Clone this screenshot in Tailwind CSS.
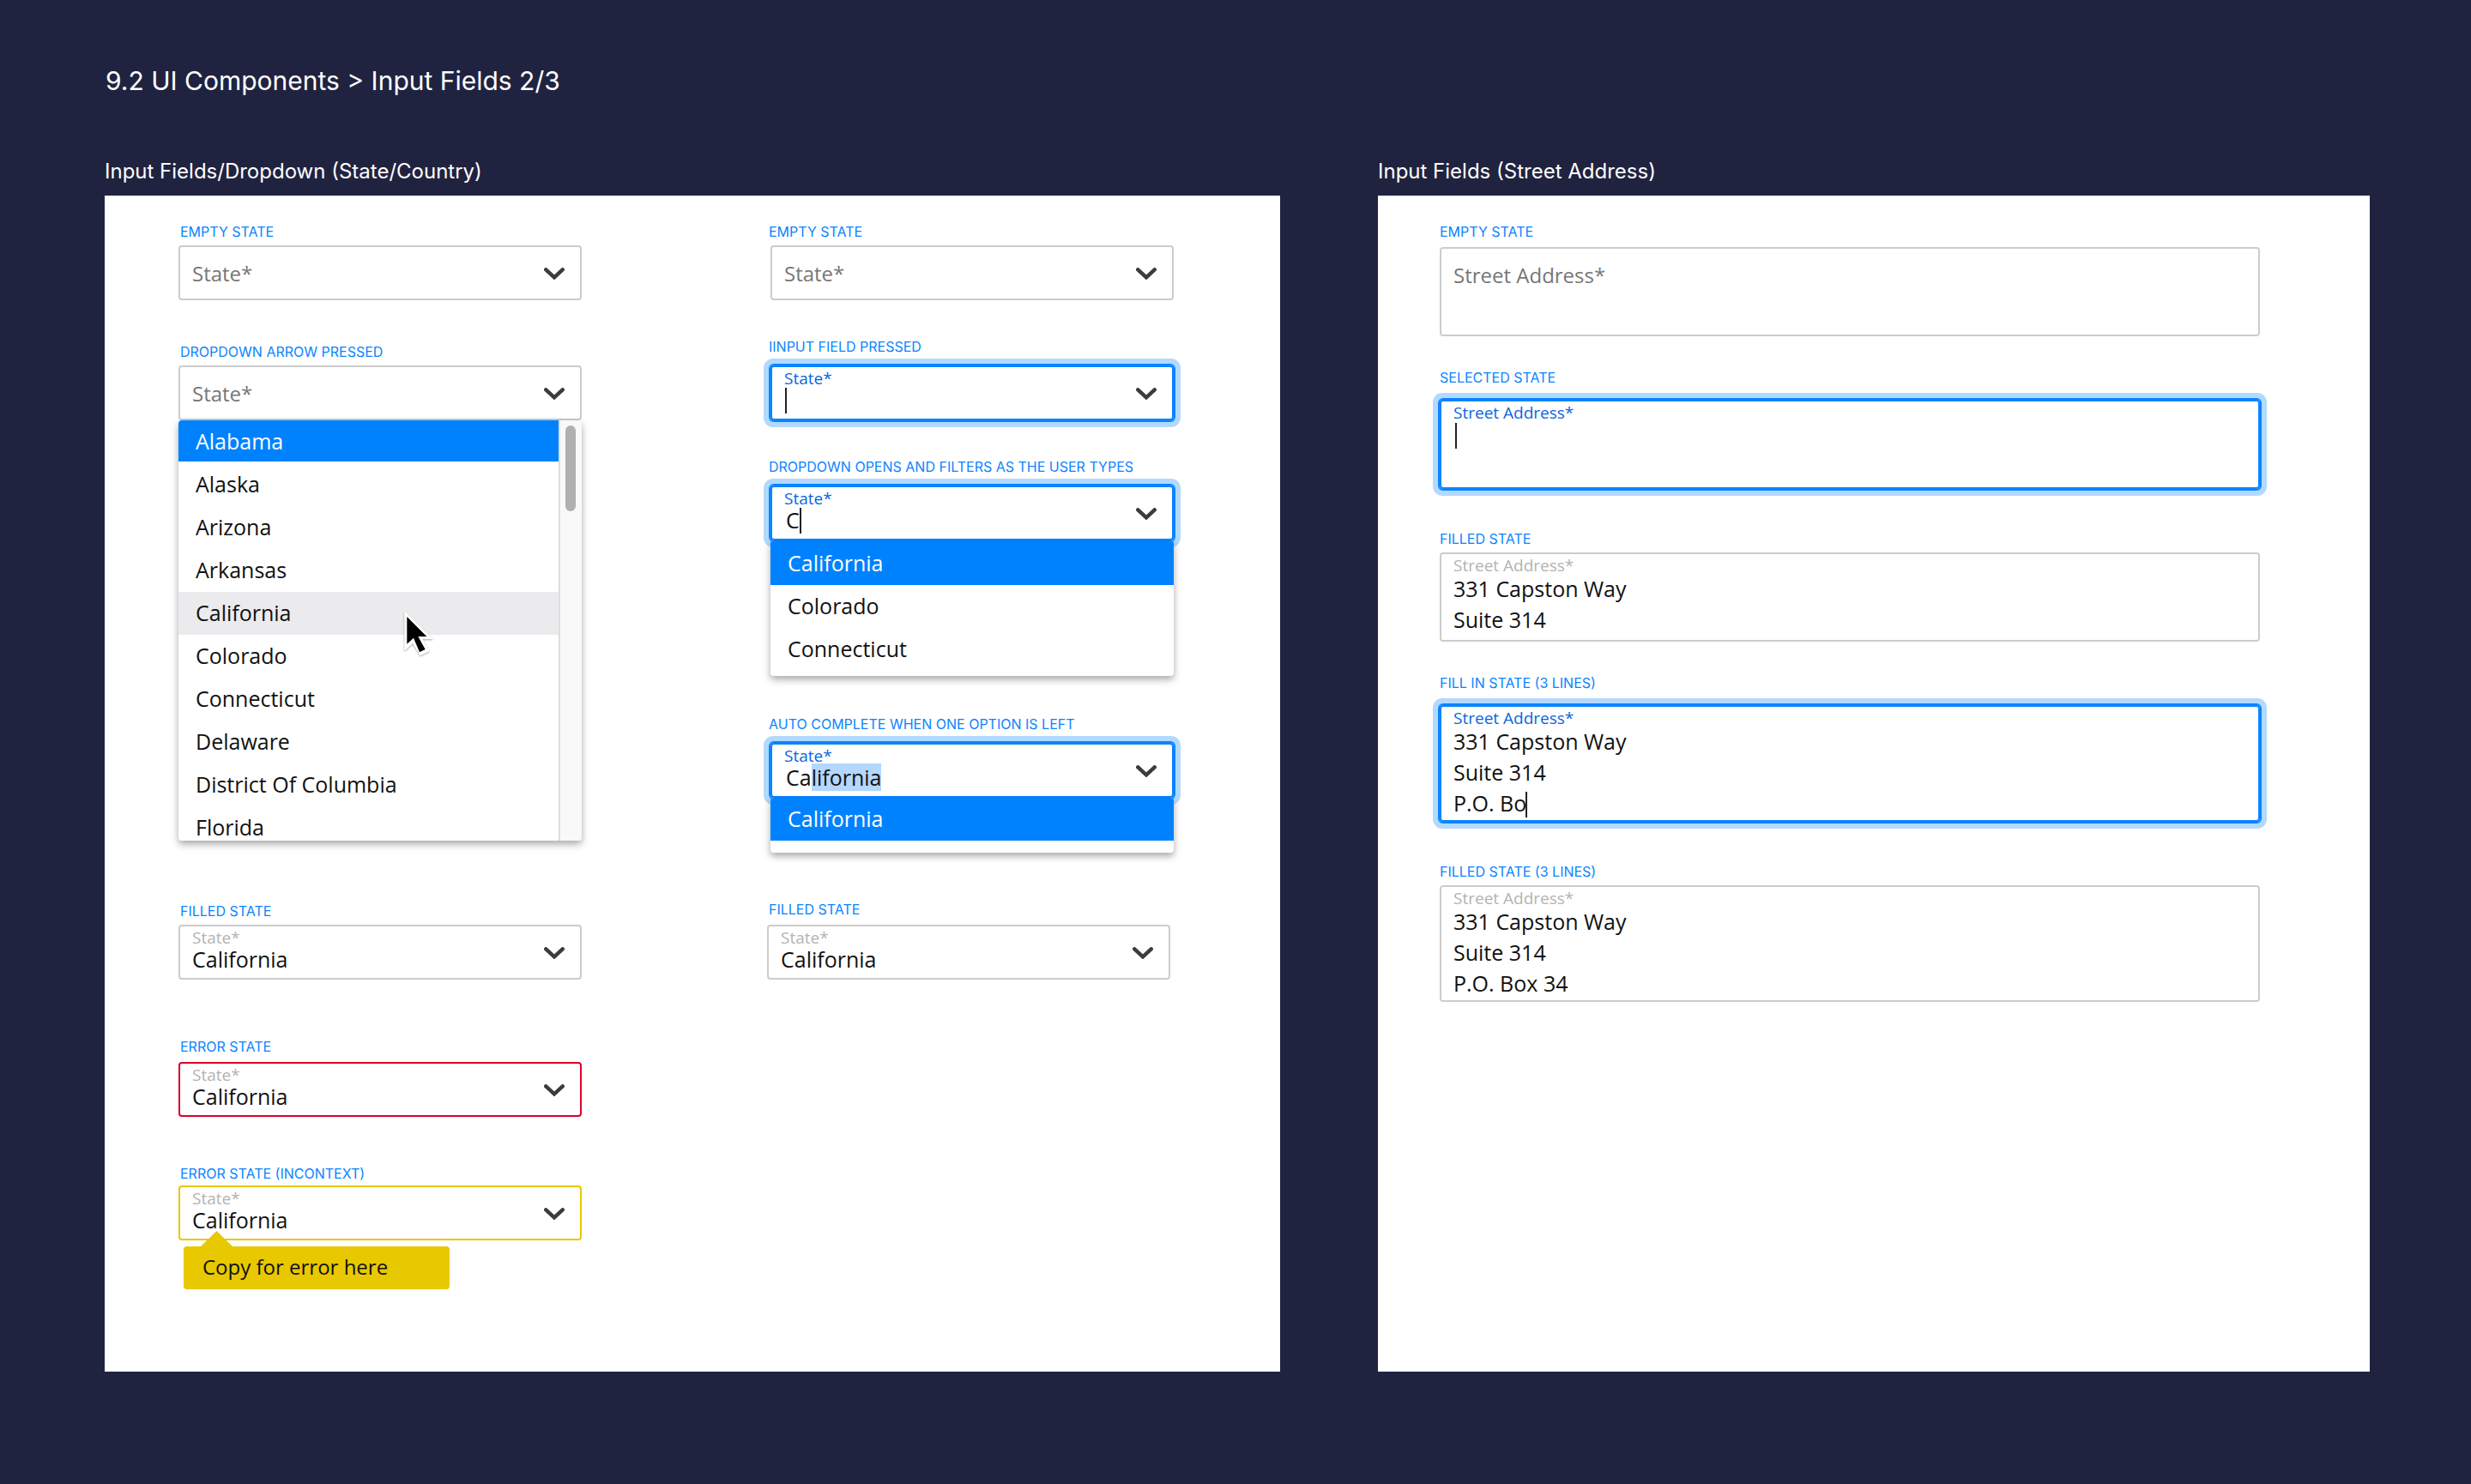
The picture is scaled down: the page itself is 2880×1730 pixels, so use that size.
<!DOCTYPE html>
<html lang="en">
<head>
<meta charset="utf-8">
<meta name="viewport" content="width=device-width, initial-scale=1">
<title>9.2 UI Components &gt; Input Fields 2/3</title>
<script src="https://cdn.jsdelivr.net/npm/@tailwindcss/browser@4"></script>
</head>
<body class="min-h-screen bg-[#202340] font-['Inter',sans-serif]">
<svg class="hidden" aria-hidden="true">
  <symbol id="chevron" viewBox="0 0 24 14">
    <path d="M2.3 2.3 12 11.4 21.7 2.3" fill="none" stroke="#3c3c3d" stroke-width="4.4" stroke-linecap="round" stroke-linejoin="miter"/>
  </symbol>
</svg>

<main class="pt-[76px] pr-[118px] pb-[130px] pl-[122px]">
  <h1 class="pl-px text-[30px] leading-9 text-white">9.2 UI Components &gt; Input Fields 2/3</h1>

  <div class="mt-[72px] grid grid-cols-[1370fr_1156fr] gap-x-[114px]">

    <!-- State / country dropdown -->
    <section class="flex flex-col gap-3">
      <h2 class="text-2xl leading-8 text-white">Input Fields/Dropdown (State/Country)</h2>
      <div class="grid flex-1 grid-cols-[470fr_474fr] content-start gap-x-[216px] bg-white pt-8 pr-[124px] pb-24 pl-[86px]">

        <div>
          <h3 class="pl-0.5 text-base leading-5 text-[#0a84ff]">EMPTY STATE</h3>
          <div class="mt-1.5 flex h-16 items-center rounded border-2 border-[#ccc] pt-0.5 pr-[18px] pl-3.5">
            <input type="text" aria-label="State" placeholder="State*" class="min-w-0 flex-1 font-['Open_Sans',sans-serif] text-[24px] leading-8 outline-none placeholder:text-[#767676]">
            <button type="button" aria-label="Show states"><svg class="h-3.5 w-6"><use href="#chevron"/></svg></button>
          </div>

          <h3 class="mt-[50px] pl-0.5 text-base leading-5 text-[#0a84ff]">DROPDOWN ARROW PRESSED</h3>
          <div class="mt-1.5 flex h-16 items-center rounded border-2 border-[#ccc] pt-0.5 pr-[18px] pl-3.5">
            <input type="text" aria-label="State" placeholder="State*" class="min-w-0 flex-1 font-['Open_Sans',sans-serif] text-[24px] leading-8 outline-none placeholder:text-[#767676]">
            <button type="button" aria-label="Hide states"><svg class="h-3.5 w-6"><use href="#chevron"/></svg></button>
          </div>
          <div class="flex h-[490px] overflow-hidden rounded bg-white shadow-[0_4px_8px_rgba(0,0,0,0.35)]">
            <ul role="listbox" aria-label="States" class="flex-1 font-['Open_Sans',sans-serif] text-[25px] leading-12 text-[#111]">
              <li role="option" aria-selected="true" class="mb-0.5 h-12 bg-[#0082ff] pl-5 text-white">Alabama</li>
              <li role="option" class="h-[50px] pl-5">Alaska</li>
              <li role="option" class="h-[50px] pl-5">Arizona</li>
              <li role="option" class="h-[50px] pl-5">Arkansas</li>
              <li role="option" class="relative h-[50px] bg-[#ebebed] pl-5">California
                <svg class="absolute top-5 left-[259px] z-10 h-[57px] w-[43px] drop-shadow-[0_1px_1px_rgba(0,0,0,0.35)]" viewBox="860 990 129 171" aria-hidden="true">
                  <path d="M873 996V1137L902 1110 928 1153 960 1138 936 1095H974Z" fill="#fff"/>
                  <path d="M882 1017V1112L905 1091 926 1141 946 1131 921 1086H951Z" fill="#000"/>
                </svg>
              </li>
              <li role="option" class="h-[50px] pl-5">Colorado</li>
              <li role="option" class="h-[50px] pl-5">Connecticut</li>
              <li role="option" class="h-[50px] pl-5">Delaware</li>
              <li role="option" class="h-[50px] pl-5">District Of Columbia</li>
              <li role="option" class="h-[50px] pl-5">Florida</li>
            </ul>
            <div class="w-[27px] border-l-2 border-[#dedede] bg-[#f9f9f9] pt-1.5 pl-1.5">
              <div class="h-[100px] w-3 rounded-full bg-[#b0b0b2]"></div>
            </div>
          </div>

          <h3 class="mt-[72px] pl-0.5 text-base leading-5 text-[#0a84ff]">FILLED STATE</h3>
          <div class="mt-1.5 flex h-16 items-center rounded border-2 border-[#ccc] pr-[18px] pl-3.5">
            <div class="flex h-full min-w-0 flex-1 flex-col pt-0.5 font-['Open_Sans',sans-serif]">
              <label for="state-filled" class="h-5 text-[19px] leading-[22px] text-[#b3b3b3]">State*</label>
              <input id="state-filled" type="text" value="California" class="h-8 w-full text-[25px] leading-8 text-[#111] outline-none">
            </div>
            <button type="button" aria-label="Show states" class="pt-0.5"><svg class="h-3.5 w-6"><use href="#chevron"/></svg></button>
          </div>

          <h3 class="mt-[68px] pl-0.5 text-base leading-5 text-[#0a84ff]">ERROR STATE</h3>
          <div class="mt-2 flex h-16 items-center rounded border-2 border-[#db0028] pr-[18px] pl-3.5">
            <div class="flex h-full min-w-0 flex-1 flex-col pt-0.5 font-['Open_Sans',sans-serif]">
              <label for="state-error" class="h-5 text-[19px] leading-[22px] text-[#b3b3b3]">State*</label>
              <input id="state-error" type="text" value="California" aria-invalid="true" class="h-8 w-full text-[25px] leading-8 text-[#111] outline-none">
            </div>
            <button type="button" aria-label="Show states" class="pt-0.5"><svg class="h-3.5 w-6"><use href="#chevron"/></svg></button>
          </div>

          <h3 class="mt-14 pl-0.5 text-base leading-5 text-[#0a84ff]">ERROR STATE (INCONTEXT)</h3>
          <div class="mt-1 flex h-16 items-center rounded border-2 border-[#e8c800] pr-[18px] pl-3.5">
            <div class="flex h-full min-w-0 flex-1 flex-col pt-0.5 font-['Open_Sans',sans-serif]">
              <label for="state-context" class="h-5 text-[19px] leading-[22px] text-[#b3b3b3]">State*</label>
              <input id="state-context" type="text" value="California" aria-invalid="true" aria-describedby="state-tip" class="h-8 w-full text-[25px] leading-8 text-[#111] outline-none">
            </div>
            <button type="button" aria-label="Show states" class="pt-0.5"><svg class="h-3.5 w-6"><use href="#chevron"/></svg></button>
          </div>
          <div id="state-tip" role="tooltip" class="relative mt-[7px] ml-1.5 h-[50px] w-[310px] rounded bg-[#e8c800] pl-[22px] font-['Open_Sans',sans-serif] text-[24px] leading-12 text-[#111]">Copy for error here
            <svg class="absolute bottom-full left-5 h-[18px] w-[37px]" viewBox="0 0 37 18" aria-hidden="true"><path d="M0 18 18.500 0 37 18Z" fill="#e8c800"/></svg>
          </div>
        </div>

        <div>
          <h3 class="pl-0.5 text-base leading-5 text-[#0a84ff]">EMPTY STATE</h3>
          <div class="mt-1.5 ml-1 flex h-16 items-center rounded border-2 border-[#ccc] pt-0.5 pr-[18px] pl-3.5">
            <input type="text" aria-label="State" placeholder="State*" class="min-w-0 flex-1 font-['Open_Sans',sans-serif] text-[24px] leading-8 outline-none placeholder:text-[#767676]">
            <button type="button" aria-label="Show states"><svg class="h-3.5 w-6"><use href="#chevron"/></svg></button>
          </div>

          <h3 class="mt-11 pl-0.5 text-base leading-5 text-[#0a84ff]">IINPUT FIELD PRESSED</h3>
          <div class="mt-3 ml-1 flex h-16 items-center rounded border-2 border-[#0a84ff] pr-[18px] pl-3.5 shadow-[0_0_0_2px_#0a84ff,0_0_0_8px_#b3d9ff]">
            <div class="flex h-full min-w-0 flex-1 flex-col pt-0.5 font-['Open_Sans',sans-serif]">
              <label for="state-pressed" class="h-5 text-[19px] leading-[22px] text-[#0a66e0]">State*</label>
              <div class="flex h-8 items-end">
                <input id="state-pressed" type="text" class="field-sizing-content h-8 text-[25px] leading-8 text-[#111] outline-none">
                <span class="h-[30px] w-0.5 bg-[#222]"></span>
              </div>
            </div>
            <button type="button" aria-label="Show states" class="pt-0.5"><svg class="h-3.5 w-6"><use href="#chevron"/></svg></button>
          </div>

          <h3 class="mt-11 pl-0.5 text-base leading-5 text-[#0a84ff]">DROPDOWN OPENS AND FILTERS AS THE USER TYPES</h3>
          <div class="mt-3 ml-1 flex h-16 items-center rounded border-2 border-[#0a84ff] pr-[18px] pl-3.5 shadow-[0_0_0_2px_#0a84ff,0_0_0_8px_#b3d9ff]">
            <div class="flex h-full min-w-0 flex-1 flex-col pt-0.5 font-['Open_Sans',sans-serif]">
              <label for="state-filter" class="h-5 text-[19px] leading-[22px] text-[#0a66e0]">State*</label>
              <div class="flex h-8 items-end pl-0.5">
                <input id="state-filter" type="text" value="C" class="field-sizing-content h-8 text-[25px] leading-8 text-[#111] outline-none">
                <span class="h-[30px] w-0.5 bg-[#222]"></span>
              </div>
            </div>
            <button type="button" aria-label="Hide states" class="pt-0.5"><svg class="h-3.5 w-6"><use href="#chevron"/></svg></button>
          </div>
          <ul role="listbox" aria-label="Matching states" class="relative ml-1 rounded bg-white pb-1.5 font-['Open_Sans',sans-serif] text-[25px] leading-12 text-[#111] shadow-[0_4px_8px_rgba(0,0,0,0.35)]">
            <li role="option" aria-selected="true" class="h-[52px] rounded-t bg-[#0082ff] pt-0.5 pl-5 text-white">California</li>
            <li role="option" class="h-[50px] pl-5">Colorado</li>
            <li role="option" class="h-[50px] pl-5">Connecticut</li>
          </ul>

          <h3 class="mt-[46px] pl-0.5 text-base leading-5 text-[#0a84ff]">AUTO COMPLETE WHEN ONE OPTION IS LEFT</h3>
          <div class="mt-3 ml-1 flex h-16 items-center rounded border-2 border-[#0a84ff] pr-[18px] pl-3.5 shadow-[0_0_0_2px_#0a84ff,0_0_0_8px_#b3d9ff]">
            <div class="flex h-full min-w-0 flex-1 flex-col pt-0.5 font-['Open_Sans',sans-serif]">
              <label for="state-auto" class="h-5 text-[19px] leading-[22px] text-[#0a66e0]">State*</label>
              <input id="state-auto" type="text" value="California" class="h-8 w-full pl-0.5 text-[25px] leading-8 text-[#111] outline-none selection:bg-[#b3d7ff] selection:text-[#111]">
            </div>
            <button type="button" aria-label="Hide states" class="pt-0.5"><svg class="h-3.5 w-6"><use href="#chevron"/></svg></button>
          </div>
          <ul role="listbox" aria-label="Matching states" class="relative ml-1 rounded bg-white pb-3.5 font-['Open_Sans',sans-serif] text-[25px] leading-12 text-[#111] shadow-[0_4px_8px_rgba(0,0,0,0.35)]">
            <li role="option" aria-selected="true" class="h-[50px] rounded-t bg-[#0082ff] pl-5 text-white">California</li>
          </ul>

          <h3 class="mt-14 pl-0.5 text-base leading-5 text-[#0a84ff]">FILLED STATE</h3>
          <div class="mt-2 mr-1 flex h-16 items-center rounded border-2 border-[#ccc] pr-[18px] pl-3.5">
            <div class="flex h-full min-w-0 flex-1 flex-col pt-0.5 font-['Open_Sans',sans-serif]">
              <label for="state-done" class="h-5 text-[19px] leading-[22px] text-[#b3b3b3]">State*</label>
              <input id="state-done" type="text" value="California" class="h-8 w-full text-[25px] leading-8 text-[#111] outline-none">
            </div>
            <button type="button" aria-label="Show states" class="pt-0.5"><svg class="h-3.5 w-6"><use href="#chevron"/></svg></button>
          </div>
        </div>
      </div>
    </section>

    <!-- Street address -->
    <section class="flex flex-col gap-3">
      <h2 class="text-2xl leading-8 text-white">Input Fields (Street Address)</h2>
      <div class="flex-1 bg-white pt-8 pr-32 pb-24 pl-[72px]">
        <h3 class="text-base leading-5 text-[#0a84ff]">EMPTY STATE</h3>
        <div class="mt-2 min-h-[104px] rounded border-2 border-[#ccc] px-3.5 pt-[13px] font-['Open_Sans',sans-serif]">
          <textarea rows="2" aria-label="Street Address" placeholder="Street Address*" class="block w-full resize-none text-[24px] leading-9 outline-none placeholder:text-[#767676]"></textarea>
        </div>

        <h3 class="mt-[38px] text-base leading-5 text-[#0a84ff]">SELECTED STATE</h3>
        <div class="relative mt-4 min-h-[104px] rounded border-2 border-[#0a84ff] px-3.5 py-0.5 font-['Open_Sans',sans-serif] shadow-[0_0_0_2px_#0a84ff,0_0_0_8px_#b3d9ff]">
          <label for="street-selected" class="block h-5 text-[19px] leading-[22px] text-[#0a66e0]">Street Address*</label>
          <textarea id="street-selected" rows="2" class="block w-full resize-none text-[25px] leading-9 text-[#111] outline-none"></textarea>
          <span class="absolute top-[25px] left-4 h-[30px] w-0.5 bg-[#222]"></span>
        </div>

        <h3 class="mt-12 text-base leading-5 text-[#0a84ff]">FILLED STATE</h3>
        <div class="mt-1.5 min-h-[104px] rounded border-2 border-[#ccc] px-3.5 py-0.5 font-['Open_Sans',sans-serif]">
          <label for="street-filled" class="block h-5 text-[19px] leading-[22px] text-[#b3b3b3]">Street Address*</label>
          <textarea id="street-filled" rows="2" class="block w-full resize-none text-[25px] leading-9 text-[#111] outline-none">331 Capston Way
Suite 314</textarea>
        </div>

        <h3 class="mt-[38px] text-base leading-5 text-[#0a84ff]">FILL IN STATE (3 LINES)</h3>
        <div class="relative mt-4 rounded border-2 border-[#0a84ff] px-3.5 py-0.5 font-['Open_Sans',sans-serif] shadow-[0_0_0_2px_#0a84ff,0_0_0_8px_#b3d9ff]">
          <label for="street-typing" class="block h-5 text-[19px] leading-[22px] text-[#0a66e0]">Street Address*</label>
          <textarea id="street-typing" rows="3" class="block w-full resize-none text-[25px] leading-9 text-[#111] outline-none">331 Capston Way
Suite 314
P.O. Bo</textarea>
          <span class="absolute bottom-[3px] left-[98px] h-[30px] w-0.5 bg-[#222]"></span>
        </div>

        <h3 class="mt-12 text-base leading-5 text-[#0a84ff]">FILLED STATE (3 LINES)</h3>
        <div class="mt-1.5 rounded border-2 border-[#ccc] px-3.5 py-0.5 font-['Open_Sans',sans-serif]">
          <label for="street-done" class="block h-5 text-[19px] leading-[22px] text-[#b3b3b3]">Street Address*</label>
          <textarea id="street-done" rows="3" class="block w-full resize-none text-[25px] leading-9 text-[#111] outline-none">331 Capston Way
Suite 314
P.O. Box 34</textarea>
        </div>
      </div>
    </section>
  </div>
</main>
<script>
  // The completed part of the typed text stays selected so that typing replaces it.
  const auto = document.getElementById('state-auto');
  auto.focus({ preventScroll: true });
  auto.setSelectionRange(2, auto.value.length);
</script>
</body>
</html>
